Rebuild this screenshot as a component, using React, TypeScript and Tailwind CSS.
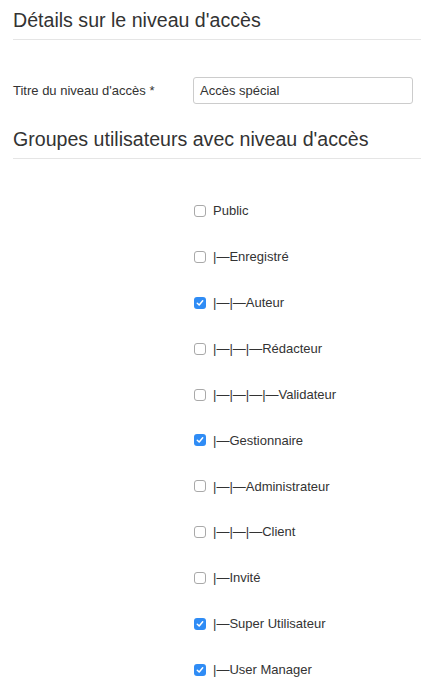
const groups = [
  { label: 'Public', checked: false },
  { label: '|—Enregistré', checked: false },
  { label: '|—|—Auteur', checked: true },
  { label: '|—|—|—Rédacteur', checked: false },
  { label: '|—|—|—|—Validateur', checked: false },
  { label: '|—Gestionnaire', checked: true },
  { label: '|—|—Administrateur', checked: false },
  { label: '|—|—|—Client', checked: false },
  { label: '|—Invité', checked: false },
  { label: '|—Super Utilisateur', checked: true },
  { label: '|—User Manager', checked: true },
];

function Box({ checked }: { checked: boolean }) {
  if (checked) {
    return (
      <span className="flex h-[12px] w-[12px] items-center justify-center rounded-[3px] bg-[#2f8cf5]">
        <svg width="8" height="8" viewBox="0 0 8 8">
          <path d="M1.3 4.2 L3.2 6 L6.7 1.8" fill="none" stroke="white" strokeWidth="1.5" strokeLinecap="round" strokeLinejoin="round" />
        </svg>
      </span>
    );
  }
  return <span className="h-[12px] w-[12px] rounded-[3px] border border-[#a9a9a9] bg-white" />;
}

export default function App() {
  return (
    <div className="min-h-[695px] bg-white pl-[13px] text-[#333] [font-family:'Liberation_Sans',Arial,sans-serif]">
      <h2 className="pt-[8px] text-[19.6px] leading-[24px]">Détails sur le niveau d'accès</h2>
      <div className="mt-[7px] border-t border-[#e5e5e5]" />

      <div className="mt-[37px] flex items-center">
        <label className="w-[180px] text-[13px]">Titre du niveau d'accès *</label>
        <div className="flex h-[27px] w-[220px] items-center rounded-[3px] border border-[#ccc] px-[6px] text-[13px]">
          Accès spécial
        </div>
      </div>

      <h2 className="mt-[23px] text-[19.6px] leading-[24px]">Groupes utilisateurs avec niveau d'accès</h2>
      <div className="mt-[7px] border-t border-[#e5e5e5]" />

      <div className="mt-[29px] flex flex-col pl-[181px]">
        {groups.map((g) => (
          <div key={g.label} className="flex h-[45.9px] items-center gap-[7px] text-[13px]">
            <Box checked={g.checked} />
            <span>{g.label}</span>
          </div>
        ))}
      </div>
    </div>
  );
}
